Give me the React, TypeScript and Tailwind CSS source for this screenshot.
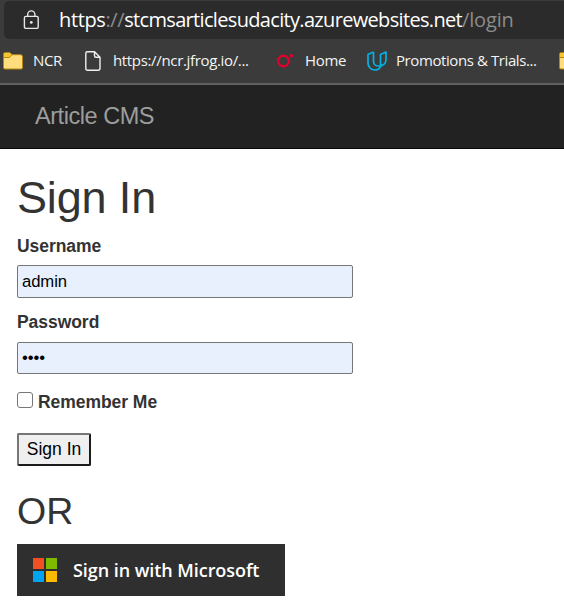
import React from "react";

const UI = "font-['Open_Sans','Noto_Sans',sans-serif]";

function Folder() {
  return (
    <svg width="20" height="18" viewBox="0 0 20 18" className="block shrink-0">
      <path d="M.5 2.2Q.5.7 2 .7h5l2 2h8.500q2 0 2 2V15.500q0 1.500-1.500 1.500H2Q.5 17 .5 15.500z" fill="#ffdc7c" stroke="#b8860f" />
      <path d="M1 2.200q0-1 1-1h4.800l1.700 1.700L6.500 5.500H1z" fill="#f7c52d" />
      <path d="M1 5.500h5.500L9 2.700" fill="none" stroke="#b8860f" />
    </svg>
  );
}

function AddressBar() {
  return (
    <div className="ml-1 mt-px flex h-[38px] items-center rounded-l-[5px] bg-[#2b2b2b] pl-[19px]">
      <svg width="17" height="20" viewBox="0 0 17 20" fill="none" stroke="#e8e8e8" strokeWidth="1.4" className="-mt-px shrink-0">
        <rect x="1.400" y="6.400" width="13.800" height="12" rx="1.500" />
        <path d="M4.700 6.400V4.500a3.600 3.600 0 0 1 7.200 0v1.900" />
        <circle cx="8.300" cy="12.400" r="1.400" fill="#e8e8e8" stroke="none" />
      </svg>
      <div className="-mt-px ml-[19px] whitespace-nowrap text-[20px] tracking-[-0.38px] text-[#8c8c8c]">
        <span className="text-white">https</span>://
        <span className="tracking-[-0.67px] text-white">stcmsarticlesudacity.azurewebsites.net</span>
        <span className="tracking-[-0.15px]">/login</span>
      </div>
    </div>
  );
}

function Bookmarks() {
  return (
    <div className="flex h-11 items-center overflow-hidden whitespace-nowrap pl-[3px] text-[15px] text-[#f4f4f4]">
      <Folder />
      <span className="-mt-0.5 ml-[10px] w-[52px] shrink-0 tracking-[-0.4px]">NCR</span>
      <svg width="16" height="20" viewBox="0 0 16 20" fill="none" stroke="#f0f0f0" strokeWidth="1.400" className="shrink-0">
        <path d="M2.500.8h7l5.500 5.500v11q0 2-2 2H2.500q-1.700 0-1.700-1.700V2.500Q.8.8 2.500.8zM9.500.8v4q0 1.500 1.500 1.500h4" />
      </svg>
      <span className="-mt-0.5 ml-3 w-[163px] shrink-0 tracking-[-0.34px]">https://ncr.jfrog.io/...</span>
      <svg width="18" height="15" viewBox="0 0 18 15" className="-mt-px shrink-0">
        <circle cx="7.500" cy="8" r="5.400" fill="none" stroke="#e4002b" strokeWidth="2.200" />
        <circle cx="15.500" cy="2.800" r="1.700" fill="#e4002b" />
      </svg>
      <span className="-mt-0.5 ml-[11px] w-[62px] shrink-0 tracking-[-0.3px]">Home</span>
      <svg width="20" height="20" viewBox="0 0 20 20" fill="none" stroke="#02b3e4" strokeWidth="1.700" strokeLinejoin="round" className="shrink-0">
        <path d="M6.500 1 1 3.500V12c0 4 3 7 7 7 3.500 0 6-2.500 6-6" />
        <path d="M6.500 1v9.500c0 3 2.500 4.500 5 4.500 4.500 0 7.500-2.500 7.500-6.500V1l-5.500 2.500V15" />
      </svg>
      <span className="-mt-0.5 ml-[9px] w-[163px] shrink-0 tracking-[-0.41px]">Promotions &amp; Trials...</span>
      <Folder />
    </div>
  );
}

function Field({ label, value, type, className }: { label: string; value: string; type: string; className: string }) {
  return (
    <label className="block font-bold leading-[25px] tracking-[-0.05px]">
      {label}
      <input
        type={type}
        defaultValue={value}
        className={`block w-[336px] rounded-[2px] border border-[#767676] bg-[#e8f0fe] px-1 text-[16.7px] font-normal tracking-[-0.1px] text-black outline-none ${className}`}
      />
    </label>
  );
}

export default function App() {
  return (
    <div className="h-[616px] w-full overflow-hidden bg-white">
      <div className={`flex h-[85px] flex-col border-b-2 border-[#606060] bg-[#3b3b3b] ${UI}`}>
        <AddressBar />
        <Bookmarks />
      </div>
      <div className="font-['Liberation_Sans',Arial,sans-serif] text-[17.5px] text-[#333]">
        <nav className="flex h-16 items-center border-b border-[#080808] bg-[#222] pl-[35px] text-[23.500px] tracking-[-0.45px] text-[#9d9d9d]">
          Article CMS
        </nav>
        <main className="flex flex-col items-start pl-[17px] pt-[24px]">
          <h1 className="text-[45px] leading-[50px] tracking-[-0.15px]">Sign In</h1>
          <div className="mt-[11px]">
            <Field label="Username" value="admin" type="text" className="mt-[6px] h-[33px]" />
          </div>
          <div className="mt-3">
            <Field label="Password" value="pass" type="password" className="mt-[7px] h-8" />
          </div>
          <label className="mt-[15px] flex h-[25px] items-center font-bold tracking-[-0.05px]">
            <input type="checkbox" className="mb-[3px] mr-[5px] h-4 w-4 appearance-none rounded-[3px] border border-[#767676] bg-white" />
            <span className="mt-0.5">Remember Me</span>
          </label>
          <button className="mt-[19px] h-[33px] w-[74px] rounded-[2px] border-2 border-b-[#1c1c1c] border-l-[#767676] border-r-[#1c1c1c] border-t-[#767676] bg-[#efefef] text-black">
            Sign In
          </button>
          <h2 className="mt-6 text-[37.5px] leading-[42px]">OR</h2>
          <button className={`mt-3 flex h-[52px] w-[268px] items-center whitespace-nowrap bg-[#2f2f2f] pl-4 text-[18px] font-semibold text-white ${UI}`}>
            <span className="mr-4 grid shrink-0 grid-cols-[11px_11px] grid-rows-[11px_11px] gap-[2px]">
              <span className="bg-[#f25022]" />
              <span className="bg-[#7fba00]" />
              <span className="bg-[#00a4ef]" />
              <span className="bg-[#ffb900]" />
            </span>
            <span className="tracking-[-0.06px]">Sign in with Microsoft</span>
          </button>
        </main>
      </div>
    </div>
  );
}
